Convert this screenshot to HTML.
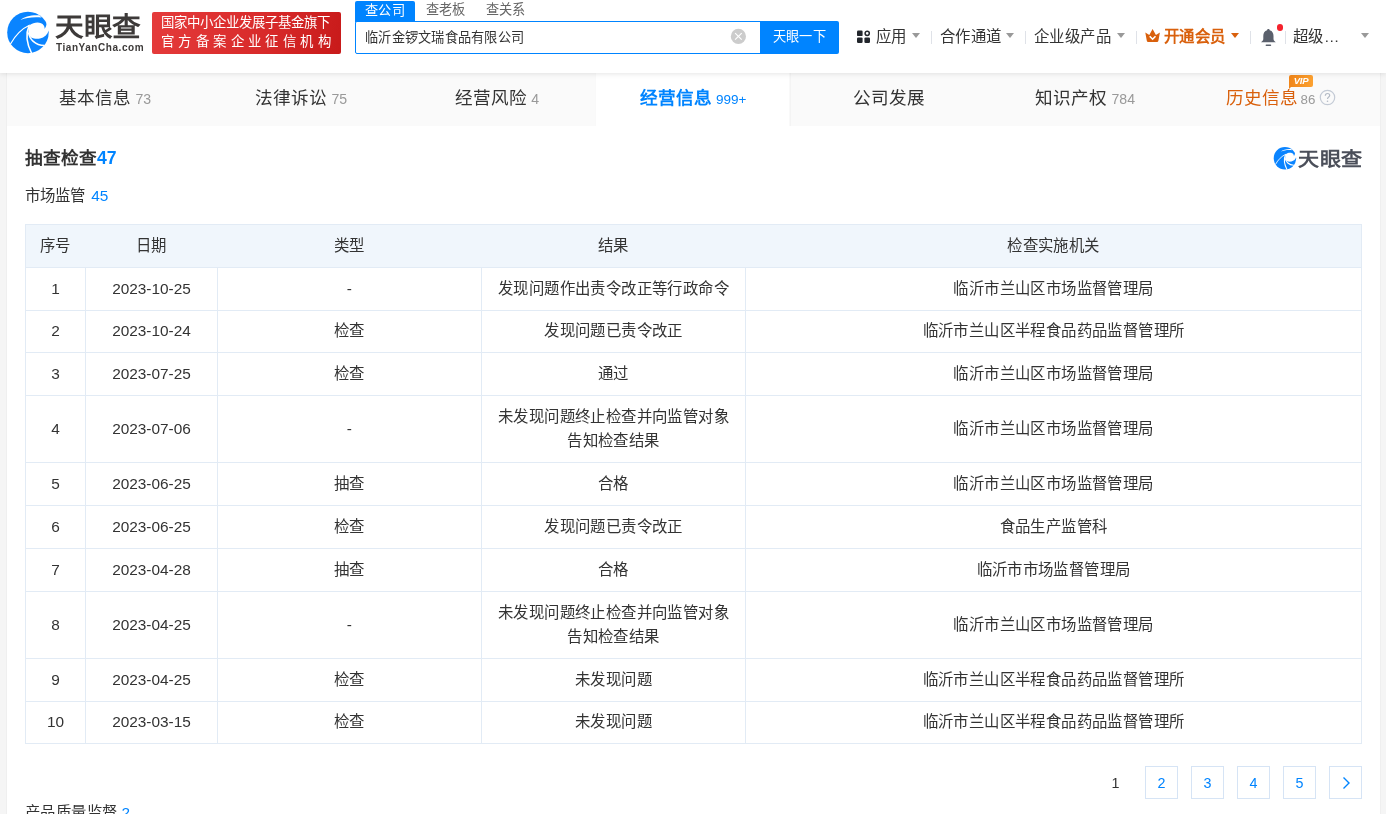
<!DOCTYPE html>
<html lang="zh-CN">
<head>
<meta charset="utf-8">
<title>天眼查</title>
<style>
*{box-sizing:border-box;margin:0;padding:0}
html,body{width:1386px;height:814px;overflow:hidden;background:#f5f5f5;font-family:"Liberation Sans",sans-serif;color:#333;}
body{position:relative}
#header,#main{will-change:transform}
.abs{position:absolute;white-space:nowrap}
#header{position:absolute;left:0;top:0;width:1386px;height:73px;background:#fff;box-shadow:0 1px 5px rgba(0,0,0,.10);z-index:5}
#main{position:absolute;left:7px;top:73px;width:1373px;height:741px;background:#fff;box-shadow:-1px 0 0 #efefef,1px 0 0 #efefef}
#tabs{position:absolute;left:0;top:0;width:1373px;height:53px;background:#fafafa;display:flex}
.tab{width:196px;height:53px;text-align:center;line-height:50px;font-size:17.6px;color:#333;white-space:nowrap}
.tab small{font-size:14.1px;color:#999;margin-left:4.5px}
.tab.on{background:#fff;color:#0084ff;font-weight:bold}
.tab.on small{color:#0084ff;font-weight:normal;font-size:13.5px}
.tab.on{box-shadow:inset -1.5px 0 0 #f4f4f4, inset 0.5px 0 0 #f4f4f4}
.tab.vip{color:#d9600c}
table{position:absolute;left:18px;top:151px;width:1337px;border-collapse:collapse;table-layout:fixed;font-size:15.4px}
td:nth-child(n+3),th{letter-spacing:.4px}
td,th{border:1px solid #e2ebf5;text-align:center;vertical-align:middle;font-weight:normal;line-height:24.2px;padding:0}
th{background:#f0f6fc;height:43px;border-left-color:transparent;border-right-color:transparent}
tr:first-child th:first-child{border-left-color:#e2ebf5}tr:first-child th:last-child{border-right-color:#e2ebf5}
.pg{position:absolute;top:693px;width:33px;height:33px;border:1px solid #d6e4f5;color:#0084ff;font-size:14.3px;text-align:center;line-height:33px}
.nv{top:25.5px;font-size:15.4px;line-height:22px;color:#333;letter-spacing:.45px}
.tri{top:33px;width:0;height:0;border-left:4px solid transparent;border-right:4px solid transparent;border-top:5px solid #999}
.sep{top:31px;width:1px;height:13px;background:#dfe2e8}
</style>
</head>
<body>
<div id="header">
  <!-- logo -->
  <svg class="abs" style="left:4px;top:8px" width="50" height="50" viewBox="0 0 50 50">
    <circle cx="23.95" cy="24.45" r="20.75" fill="#0a84ff"/>
    <path d="M16.4 11.9 C20 8.8 27 6.8 35.3 7.3 L37.6 9.6 C29 8.6 22 10.1 16.4 11.9Z" fill="#fff"/>
    <path d="M25.8 17.1 C30 13.8 37 13.3 39.8 17.4 C40.6 18.9 40.8 20 40.5 21 C41.6 19.5 42.6 17.5 42.5 15 L47 14 L47 23 L44.6 22.8 C43.5 26.5 40.5 29.6 36 30.6 C32.5 31.2 29.5 30.6 27 29.4 C25.2 27.8 24.3 25.6 24.4 23.5 C24.4 21 25 19 25.8 17.1Z" fill="#fff"/>
    <path d="M25.9 17 C18 20.5 11.5 27 6.3 36.2" stroke="#fff" stroke-width="1.2" fill="none"/>
    <path d="M25.1 17.6 C21.8 25 22.4 35 27.7 45.5" stroke="#fff" stroke-width="1.55" fill="none"/>
    <path d="M24.6 24.5 C25.3 31 31 37.3 40.5 37.6" stroke="#fff" stroke-width="1.5" fill="none"/>
  </svg>
  <div class="abs" id="lg1" style="left:54.5px;top:9px;font-size:26px;font-weight:bold;color:#3d3a39;letter-spacing:0px;line-height:36px;transform:scaleX(1.1);transform-origin:0 0">天眼查</div>
  <div class="abs" id="lg2" style="left:56px;top:42.5px;font-size:10px;font-weight:bold;color:#3d3a39;letter-spacing:0.55px;line-height:10px">TianYanCha.com</div>
  <!-- red badge -->
  <div class="abs" style="left:152px;top:12px;width:189px;height:42px;border-radius:2px;background:linear-gradient(100deg,#e53b3b 0%,#d82a2a 60%,#c81a1a 100%);color:#fff;font-size:13.4px;line-height:18.5px;padding:2.3px 0 0 9px;font-weight:500">
    <div>国家中小企业发展子基金旗下</div>
    <div style="letter-spacing:4.4px">官方备案企业征信机构</div>
  </div>
  <!-- search -->
  <div class="abs" style="left:355px;top:1px;width:60px;height:21px;background:#0084ff;color:#fff;font-size:13.2px;line-height:19px;text-align:center;border-radius:2px 2px 0 0;letter-spacing:.4px">查公司</div>
  <div class="abs" style="left:426px;top:1px;font-size:13.2px;line-height:18px;color:#666">查老板</div>
  <div class="abs" style="left:486px;top:1px;font-size:13.2px;line-height:18px;color:#666">查关系</div>
  <div class="abs" style="left:355px;top:21px;width:406px;height:33px;border:1px solid #0084ff;border-radius:2px 0 0 2px;background:#fff;font-size:13.2px;line-height:31px;padding-left:9px;color:#333;letter-spacing:.25px">临沂金锣文瑞食品有限公司</div>
  <svg class="abs" style="left:730px;top:28px" width="17" height="17" viewBox="0 0 17 17"><circle cx="8.4" cy="8.4" r="7.6" fill="#ccc"/><path d="M5.1 5.1 L11.7 11.7 M11.7 5.1 L5.1 11.7" stroke="#fff" stroke-width="1.15" fill="none"/></svg>
  <div class="abs" style="left:760px;top:21px;width:79px;height:33px;background:#0084ff;color:#fff;font-size:13.2px;line-height:32px;text-align:center;border-radius:0 2px 2px 0;letter-spacing:.35px;padding-left:0px">天眼一下</div>
  <!-- nav -->
  <svg class="abs" style="left:857px;top:30px" width="14" height="14" viewBox="0 0 14 14"><rect x="0" y="0.5" width="5.6" height="5.6" rx="1.2" fill="#22262c"/><rect x="0" y="7.4" width="5.6" height="5.6" rx="1.2" fill="#22262c"/><rect x="7.4" y="7.4" width="5.6" height="5.6" rx="1.2" fill="#22262c"/><circle cx="10.2" cy="3.3" r="2.1" fill="none" stroke="#22262c" stroke-width="1.5"/></svg>
  <div class="abs nv" style="left:876px">应用</div>
  <div class="abs tri" style="left:912px"></div>
  <div class="abs sep" style="left:931px"></div>
  <div class="abs nv" style="left:940px">合作通道</div>
  <div class="abs tri" style="left:1006px"></div>
  <div class="abs sep" style="left:1025px"></div>
  <div class="abs nv" style="left:1034px">企业级产品</div>
  <div class="abs tri" style="left:1117px"></div>
  <div class="abs sep" style="left:1136px"></div>
  <svg class="abs" style="left:1144px;top:28px" width="17" height="16" viewBox="0 0 17 16"><path d="M1.3 4.5 L5.3 6.9 L8.6 1 L11.9 6.9 L15.9 4.5 L14.4 12.8 Q14.2 14.1 13 14.1 L4.2 14.1 Q3 14.1 2.8 12.8 Z" fill="#d9600c"/><path d="M5.7 8.2 L8.6 11.2 L11.5 8.2" stroke="#fff" stroke-width="1.6" fill="none"/></svg>
  <div class="abs nv" style="left:1164px;color:#d9600c;font-weight:bold;letter-spacing:0.3px">开通会员</div>
  <div class="abs tri" style="left:1231px;border-top-color:#d9600c"></div>
  <div class="abs sep" style="left:1250px"></div>
  <svg class="abs" style="left:1259px;top:28px" width="19" height="20" viewBox="0 0 19 20"><path d="M9.4 1 C8.6 1 8.2 1.5 8.1 2.2 C5.6 2.9 4.3 5.2 4.3 8 L4.3 11 C4.3 12.6 3.2 13.2 2 14.3 L16.8 14.3 C15.6 13.2 14.5 12.6 14.5 11 L14.5 8 C14.5 5.2 13.2 2.9 10.7 2.2 C10.6 1.5 10.2 1 9.4 1Z" fill="#5a606c"/><rect x="6.6" y="16.5" width="5.6" height="1.5" rx="0.7" fill="#5a606c"/></svg>
  <div class="abs" style="left:1276.6px;top:24.2px;width:6.6px;height:6.6px;border-radius:50%;background:#f5222d"></div>
  <div class="abs sep" style="left:1285px"></div>
  <div class="abs nv" style="left:1293px">超级…</div>
  <div class="abs tri" style="left:1361px"></div>
</div>


<div id="main">
  <div id="tabs">
    <div class="tab">基本信息<small>73</small></div>
    <div class="tab">法律诉讼<small>75</small></div>
    <div class="tab">经营风险<small>4</small></div>
    <div class="tab on">经营信息<small>999+</small></div>
    <div class="tab">公司发展</div>
    <div class="tab">知识产权<small>784</small></div>
    <div class="tab vip" style="position:relative">历史信息<small style="margin-left:2.5px;font-size:13.3px">86</small><svg width="17" height="17" viewBox="0 0 17 17" style="vertical-align:-1.5px;margin-left:3.5px"><circle cx="8.5" cy="8.5" r="7.2" fill="none" stroke="#c3cad5" stroke-width="1.2"/><path d="M6.3 6.8 C6.3 5.2 7.3 4.5 8.5 4.5 C9.8 4.5 10.7 5.3 10.7 6.5 C10.7 8 8.5 8.2 8.5 10" stroke="#b3bac5" stroke-width="1.2" fill="none"/><circle cx="8.5" cy="12.2" r="0.8" fill="#b3bac5"/></svg>
      <div style="position:absolute;left:106px;top:2px;width:24px;height:12px;border-radius:2px 2px 2px 0;background:linear-gradient(90deg,#f08519,#fca130);color:#fff;font-size:9.5px;font-weight:bold;font-style:italic;line-height:12px;text-align:center;letter-spacing:-0.3px">VIP</div>
      <div style="position:absolute;left:106px;top:13px;width:0;height:0;border-top:3px solid #f08519;border-right:3px solid transparent"></div>
    </div>
  </div>

  <div class="abs" style="left:18px;top:73px;font-size:17.6px;font-weight:bold;line-height:24px;color:#333">抽查检查<span style="color:#0084ff;margin-left:0px">47</span></div>
  <div class="abs" style="left:18px;top:112px;font-size:15.4px;line-height:22px;color:#333">市场监管 <span style="color:#0084ff;margin-left:2px">45</span></div>

  <svg class="abs" style="left:1264.9px;top:71.8px" width="27" height="27" viewBox="0 0 50 50">
    <circle cx="23.95" cy="24.45" r="20.75" fill="#0a84ff"/>
    <path d="M16.4 11.9 C20 8.8 27 6.8 35.3 7.3 L37.6 9.6 C29 8.6 22 10.1 16.4 11.9Z" fill="#fff"/>
    <path d="M25.8 17.1 C30 13.8 37 13.3 39.8 17.4 C40.6 18.9 40.8 20 40.5 21 C41.6 19.5 42.6 17.5 42.5 15 L47 14 L47 23 L44.6 22.8 C43.5 26.5 40.5 29.6 36 30.6 C32.5 31.2 29.5 30.6 27 29.4 C25.2 27.8 24.3 25.6 24.4 23.5 C24.4 21 25 19 25.8 17.1Z" fill="#fff"/>
    <path d="M25.9 17 C18 20.5 11.5 27 6.3 36.2" stroke="#fff" stroke-width="1.6" fill="none"/>
    <path d="M25.1 17.6 C21.8 25 22.4 35 27.7 45.5" stroke="#fff" stroke-width="2" fill="none"/>
    <path d="M24.6 24.5 C25.3 31 31 37.3 40.5 37.6" stroke="#fff" stroke-width="2" fill="none"/>
  </svg>
  <div class="abs" id="lg3" style="left:1291.3px;top:72.3px;font-size:19.5px;font-weight:bold;color:#4b4f5a;line-height:28px;transform:scaleX(1.08);transform-origin:0 0">天眼查</div>
  <table>
    <colgroup><col style="width:60px"><col style="width:132px"><col style="width:264px"><col style="width:264px"><col></colgroup>
    <tr><th>序号</th><th>日期</th><th>类型</th><th>结果</th><th>检查实施机关</th></tr>
    <tr style="height:43px"><td>1</td><td>2023-10-25</td><td>-</td><td>发现问题作出责令改正等行政命令</td><td>临沂市兰山区市场监督管理局</td></tr>
    <tr style="height:42px"><td>2</td><td>2023-10-24</td><td>检查</td><td>发现问题已责令改正</td><td>临沂市兰山区半程食品药品监督管理所</td></tr>
    <tr style="height:43px"><td>3</td><td>2023-07-25</td><td>检查</td><td>通过</td><td>临沂市兰山区市场监督管理局</td></tr>
    <tr style="height:67px"><td>4</td><td>2023-07-06</td><td>-</td><td>未发现问题终止检查并向监管对象<br>告知检查结果</td><td>临沂市兰山区市场监督管理局</td></tr>
    <tr style="height:43px"><td>5</td><td>2023-06-25</td><td>抽查</td><td>合格</td><td>临沂市兰山区市场监督管理局</td></tr>
    <tr style="height:43px"><td>6</td><td>2023-06-25</td><td>检查</td><td>发现问题已责令改正</td><td>食品生产监管科</td></tr>
    <tr style="height:43px"><td>7</td><td>2023-04-28</td><td>抽查</td><td>合格</td><td>临沂市市场监督管理局</td></tr>
    <tr style="height:67px"><td>8</td><td>2023-04-25</td><td>-</td><td>未发现问题终止检查并向监管对象<br>告知检查结果</td><td>临沂市兰山区市场监督管理局</td></tr>
    <tr style="height:43px"><td>9</td><td>2023-04-25</td><td>检查</td><td>未发现问题</td><td>临沂市兰山区半程食品药品监督管理所</td></tr>
    <tr style="height:42px"><td>10</td><td>2023-03-15</td><td>检查</td><td>未发现问题</td><td>临沂市兰山区半程食品药品监督管理所</td></tr>
  </table>

  <div class="abs" style="left:1092px;top:693px;width:33px;height:33px;font-size:14.3px;text-align:center;line-height:35px;color:#333">1</div>
  <div class="pg" style="left:1138px">2</div>
  <div class="pg" style="left:1184px">3</div>
  <div class="pg" style="left:1230px">4</div>
  <div class="pg" style="left:1276px">5</div>
  <div class="pg" style="left:1322px"><svg width="10" height="14" viewBox="0 0 10 14" style="vertical-align:-2px"><path d="M2.5 1.5 L8 7 L2.5 12.5" stroke="#0084ff" stroke-width="1.4" fill="none"/></svg></div>

  <div class="abs" style="left:18px;top:729px;font-size:15.4px;line-height:22px;color:#333;letter-spacing:.4px">产品质量监督 <span style="color:#0084ff;margin-left:-0.7px">2</span></div>
</div>
</body>
</html>
